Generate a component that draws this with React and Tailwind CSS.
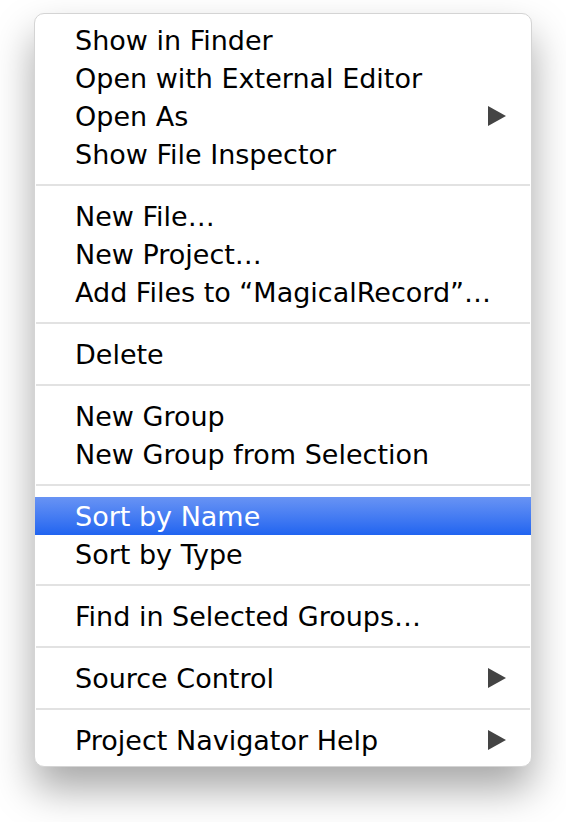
const groups = [
  [
    { label: 'Show in Finder' },
    { label: 'Open with External Editor' },
    { label: 'Open As', submenu: true },
    { label: 'Show File Inspector' },
  ],
  [
    { label: 'New File…' },
    { label: 'New Project…' },
    { label: 'Add Files to “MagicalRecord”…' },
  ],
  [{ label: 'Delete' }],
  [
    { label: 'New Group' },
    { label: 'New Group from Selection' },
  ],
  [
    { label: 'Sort by Name', active: true },
    { label: 'Sort by Type' },
  ],
  [{ label: 'Find in Selected Groups…' }],
  [{ label: 'Source Control', submenu: true }],
  [{ label: 'Project Navigator Help', submenu: true }],
];

function Arrow({ active }) {
  return (
    <svg width="18" height="20" viewBox="0 0 18 20" className="shrink-0">
      <path d="M0 0 L18 10 L0 20 Z" fill={active ? '#ffffff' : '#444444'} />
    </svg>
  );
}

function MenuItem({ label, submenu, active }) {
  return (
    <div
      className={`flex h-[38px] items-center justify-between pl-[40px] pr-[25px] ${
        active ? 'bg-gradient-to-b from-[#6893f4] to-[#2064f0] text-white' : 'text-black'
      }`}
    >
      <span className="whitespace-nowrap leading-none">{label}</span>
      {submenu && <Arrow active={active} />}
    </div>
  );
}

export default function App() {
  return (
    <div className="h-[822px] w-[566px] bg-white pl-[34px] pt-[13px]">
      <div
        className="w-[498px] overflow-hidden rounded-[10px] border border-[#d4d4d4] bg-white py-[7px] text-[27px] shadow-[0_22px_40px_rgba(0,0,0,0.35)]"
        style={{ fontFamily: '"DejaVu Sans", "Liberation Sans", sans-serif' }}
      >
        {groups.map((group, gi) => (
          <div key={gi}>
            {gi > 0 && (
              <div className="flex h-[24px] items-center px-[1px]">
                <div className="h-[2px] w-full bg-[#e2e2e2]" />
              </div>
            )}
            {group.map((item) => (
              <MenuItem key={item.label} {...item} />
            ))}
          </div>
        ))}
      </div>
    </div>
  );
}
